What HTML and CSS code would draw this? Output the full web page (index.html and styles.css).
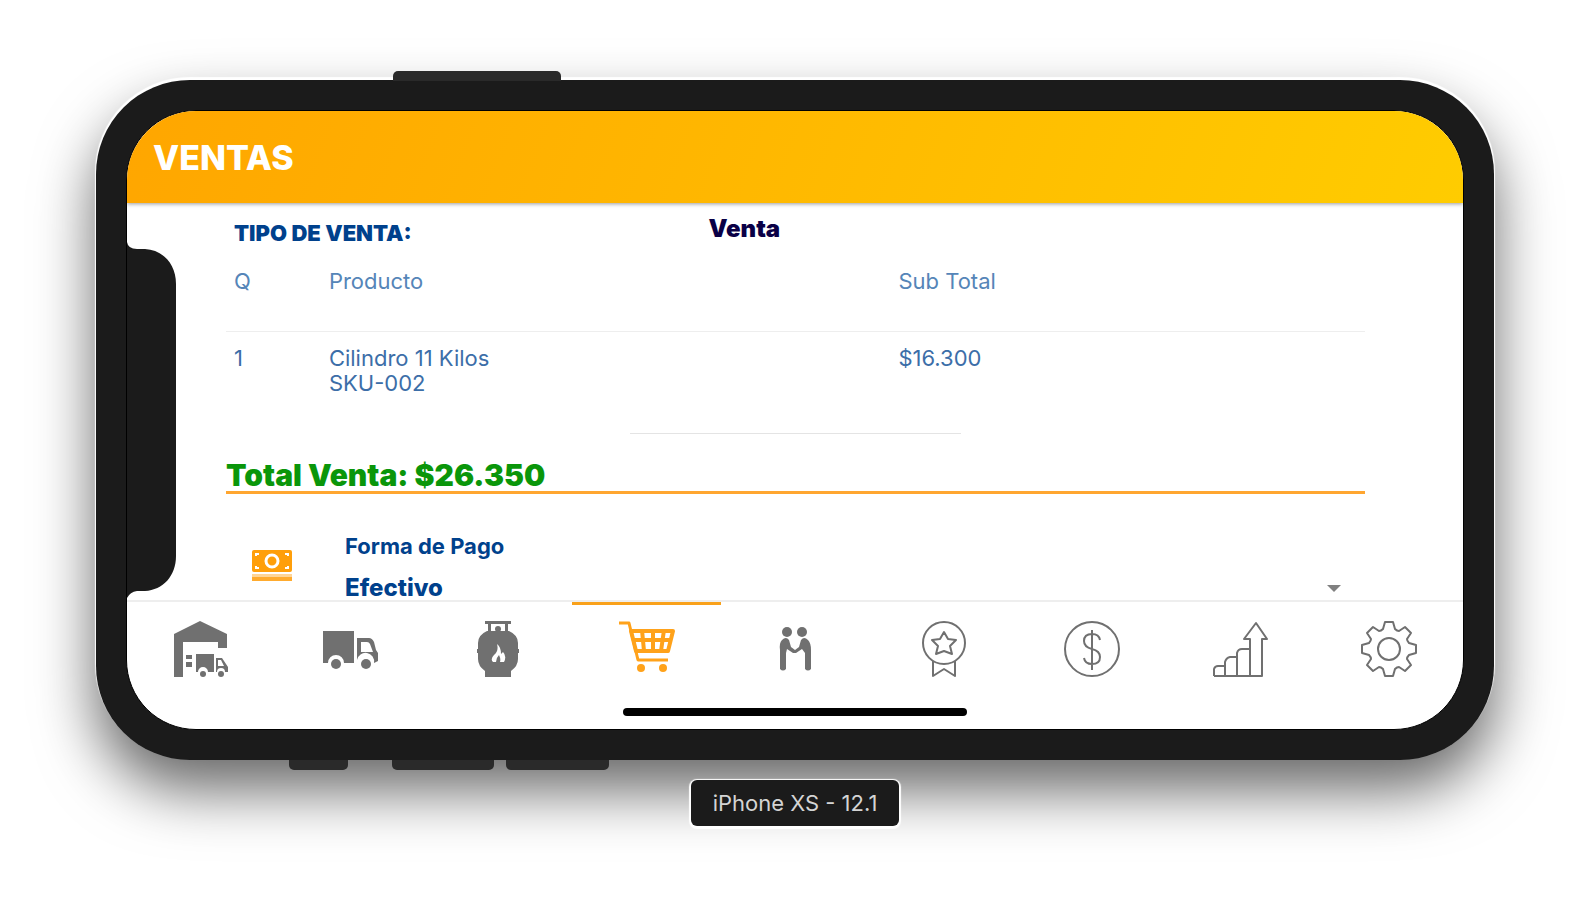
FILE: index.html
```html
<!DOCTYPE html>
<html lang="es">
<head>
    <meta charset="UTF-8">
    <meta name="viewport" content="width=device-width, initial-scale=1.0">
    <title>Ventas</title>
    <link rel="stylesheet" href="styles.css">
</head>
<body>

    <div class="phone">
        <span class="side-button power"></span>
        <span class="side-button mute"></span>
        <span class="side-button volume-up"></span>
        <span class="side-button volume-down"></span>

        <div class="screen">
            <header class="app-header">
                <h1>VENTAS</h1>
            </header>

            <main class="content">
                <div class="sale-type">
                    <span class="sale-label">TIPO DE VENTA:</span>
                    <strong class="sale-value">Venta</strong>
                </div>

                <table class="products">
                    <thead>
                        <tr>
                            <th class="col-q">Q</th>
                            <th class="col-product">Producto</th>
                            <th>Sub Total</th>
                        </tr>
                    </thead>
                    <tbody>
                        <tr>
                            <td>1</td>
                            <td>Cilindro 11 Kilos<br>SKU-002</td>
                            <td>$16.300</td>
                        </tr>
                    </tbody>
                </table>

                <hr class="divider">

                <h2 class="total">Total Venta: $26.350</h2>

                <form class="payment">
                    <svg class="payment-icon" viewBox="0 0 40 32">
                        <rect x="0" y="0" width="40" height="22" rx="2" fill="#ff9f0a"/>
                        <circle cx="20" cy="11" r="6" fill="none" stroke="#fff" stroke-width="3"/>
                        <path d="M4 6V4h3M33 4h3v2M4 16v2h3M33 18h3v-2" fill="none" stroke="#fff" stroke-width="2"/>
                        <path d="M0 24h40v3H0z" fill="#ffd596"/>
                        <path d="M0 27h40v4H0z" fill="#ffab2e"/>
                    </svg>
                    <div class="field">
                        <label for="payment-method">Forma de Pago</label>
                        <div class="select-wrap">
                            <select id="payment-method">
                                <option>Efectivo</option>
                            </select>
                            <svg class="caret" viewBox="0 0 14 7"><path d="M0 0h14L7 7z"/></svg>
                        </div>
                    </div>
                </form>
            </main>

            <nav class="tabs">
                <a href="#" aria-label="Bodega">
                    <svg viewBox="0 0 56 56" fill="currentColor">
                        <path d="M1 13L27 0l27 13v14h-9v-6H10v35H1z"/>
                        <path d="M13 34h6v4h-6zM13 41h6v5h-6z"/>
                        <path d="M23 33h18v18h-6a5 5 0 0 0-10 0h-2z"/>
                        <path fill-rule="evenodd" d="M43 37h6l4 6 2 3v5h-3a4 4 0 0 0-8 0h-1zM45 39v6h6l-3-6z"/>
                        <circle cx="30" cy="53" r="3"/>
                        <circle cx="48" cy="53" r="3"/>
                    </svg>
                </a>
                <a href="#" aria-label="Camión">
                    <svg viewBox="0 0 56 56" fill="currentColor">
                        <path d="M1 10h31v32H22a8 8 0 0 0-16 0H1z"/>
                        <path fill-rule="evenodd" d="M35 17h12q3 0 5 4l2 8 2 3v8l-4 2a8 8 0 0 0-17-3zM39 21v10h12l-3-8q-1-2-3-2z"/>
                        <circle cx="14" cy="43" r="5"/>
                        <circle cx="44" cy="43" r="5"/>
                    </svg>
                </a>
                <a href="#" aria-label="Cilindros">
                    <svg viewBox="0 0 56 56" fill="currentColor">
                        <path d="M15 0h26v3h-3v7h-3V3H21v7h-3V3h-3z"/>
                        <circle cx="28" cy="8" r="3"/>
                        <path fill-rule="evenodd" d="M17 10h22q9 4 9 12v6h1v4h-1v6q0 7-7 12v6H15v-6q-7-5-7-12v-6H7v-4h1v-6q0-8 9-12zM27 23q2 7-3 11-4 4-1 7h3q0-4 3-7 2 4 1 7h4q3-6-1-10l-2 2q0-7-4-10z"/>
                    </svg>
                </a>
                <a href="#" class="active" aria-label="Ventas">
                    <svg viewBox="0 0 56 56" fill="none" stroke="currentColor" stroke-width="3" stroke-linejoin="round">
                        <path d="M0 2h10l9 37h30"/>
                        <path stroke-width="4" d="M12 10h42l-5 20H17zM14 19h38M23 9l2 21M34 9v21M45 9l-3 21"/>
                        <circle cx="22" cy="47" r="4" fill="currentColor" stroke="none"/>
                        <circle cx="44" cy="47" r="4" fill="currentColor" stroke="none"/>
                    </svg>
                </a>
                <a href="#" aria-label="Clientes">
                    <svg viewBox="0 0 56 56" fill="currentColor">
                        <circle cx="20" cy="11" r="5"/>
                        <circle cx="35" cy="11" r="5"/>
                        <path d="M15 19q4-4 7 0l2 7 4 3 4-3 2-7q3-4 7 0 3 3 3 10v19q-3 3-6 0V32l-3-4-6 4h-3l-6-4-1 4v16q-3 3-6 0V29q-1-7 2-10z"/>
                    </svg>
                </a>
                <a href="#" aria-label="Premios">
                    <svg viewBox="0 0 56 56" fill="none" stroke="currentColor" stroke-width="2" stroke-linejoin="round">
                        <circle cx="29" cy="22" r="21"/>
                        <path d="M29 11l4 7 8 1-6 6 2 8-8-3-8 3 2-8-6-6 8-1z"/>
                        <path d="M18 40v15l11-7 11 7V40"/>
                    </svg>
                </a>
                <a href="#" aria-label="Pagos">
                    <svg viewBox="0 0 56 56" fill="none" stroke="currentColor" stroke-width="2">
                        <circle cx="28" cy="28" r="27"/>
                        <path d="M36 19q-1-6-8-6-8 0-8 7 0 6 8 8t8 8q0 7-8 7-7 0-8-6M28 9v40"/>
                    </svg>
                </a>
                <a href="#" aria-label="Reportes">
                    <svg viewBox="0 0 56 56" fill="none" stroke="currentColor" stroke-width="2" stroke-linejoin="round">
                        <path d="M2 55V48q1-3 4-3h7v10M13 55V41q1-4 5-5h7M25 55V32q1-4 5-4h7M38 55V18h-6L44 2l11 16h-5v37zM2 55h36"/>
                    </svg>
                </a>
                <a href="#" aria-label="Ajustes">
                    <svg viewBox="-28 -28 56 56" fill="none" stroke="currentColor" stroke-width="2" stroke-linejoin="round">
                        <path d="M-4-27H4L6-20Q8-18 10-18L16-22 22-16 18-10Q18-8 20-6L27-4V4L20 6Q18 8 18 10L22 16 16 22 10 18Q8 18 6 20L4 27H-4L-6 20Q-8 18-10 18L-16 22-22 16-18 10Q-18 8-20 6L-27 4V-4L-20-6Q-18-8-18-10L-22-16-16-22-10-18Q-8-18-6-20Z"/>
                        <circle r="11"/>
                    </svg>
                </a>
            </nav>

            <div class="home-indicator"></div>

            <svg class="notch" viewBox="0 0 50 356">
                <path d="M0 0Q1 7 10 7H18C36 8 49 22 49 42V314C49 334 36 348 18 349H10Q3 350 0 356Z"/>
            </svg>
        </div>
    </div>

    <p class="device-name">iPhone XS - 12.1</p>

</body>
</html>
```

FILE: styles.css
```css
* {
    box-sizing: border-box;
}

body {
    min-height: 100vh;
    margin: 0;
    padding: 80px 95px 0 96px;
    font-family: 'Inter', sans-serif;
    background-color: #fff;
    color: #00418c;
    font-size: 22px;
    line-height: 28px;
    overflow: hidden;
}

/* device frame */
.phone {
    position: relative;
    padding: 30px;
    border-radius: 94px;
    background-color: #1b1b1b;
    box-shadow: 0 -2px 1px 1px #fff, 0 30px 60px rgba(0, 0, 0, 0.6);
}

.screen {
    position: relative;
    overflow: hidden;
    border: 1px solid #000;
    border-radius: 70px;
    background-color: #fff;
}

.side-button {
    position: absolute;
    height: 10px;
    background-color: #2a2a2a;
}

.power {
    top: -9px;
    left: 297px;
    width: 168px;
    border-radius: 5px 5px 0 0;
}

.mute,
.volume-up,
.volume-down {
    bottom: -10px;
    border-radius: 0 0 5px 5px;
}

.mute {
    left: 193px;
    width: 59px;
}

.volume-up {
    left: 296px;
    width: 102px;
}

.volume-down {
    left: 410px;
    width: 103px;
}

.notch {
    position: absolute;
    top: 50%;
    left: 0;
    width: 50px;
    height: 356px;
    transform: translateY(-50%);
    fill: #1b1b1b;
}

.app-header {
    position: relative;
    padding: 26px 26px 24px;
    background: linear-gradient(110deg, #ffa600, #ffcc00);
    box-shadow: 0 1px 4px rgba(0, 0, 0, 0.4);
}

.app-header h1 {
    margin: 0;
    color: #fff;
    font-size: 34px;
    font-weight: 800;
    line-height: 42px;
}

.content {
    padding: 12px 98px 0 99px;
}

.sale-type {
    display: grid;
    grid-template-columns: 5fr 7fr;
}

.sale-label,
.sale-value {
    padding: 0 8px;
}

.sale-label {
    padding-top: 4px;
    font-weight: 900;
}

.sale-value {
    color: #0a0046;
    font-size: 24px;
    font-weight: 900;
}

.products {
    width: 100%;
    border-collapse: collapse;
    table-layout: fixed;
    text-align: left;
}

.products th {
    padding: 20px 8px 36px;
    border-bottom: 1px solid #eee;
    color: #5585b8;
    font-size: 22px;
    font-weight: 400;
}

.products td {
    padding: 14px 8px 8px;
    color: #3c6ea8;
    font-size: 22px;
    line-height: 25px;
    vertical-align: top;
}

.col-q {
    width: 8.33%;
}

.col-product {
    width: 50%;
}

.divider {
    width: 29%;
    margin: 29px auto 0;
    border: 0;
    border-top: 1px solid #e4e4e4;
}

.total {
    margin: 25px 0 0;
    border-bottom: 3px solid #ffa630;
    color: #0a960a;
    font-size: 30px;
    font-weight: 900;
    line-height: 32px;
}

.payment {
    display: flex;
    align-items: center;
    gap: 53px;
    margin-top: 38px;
    padding: 0 24px 0 26px;
}

.payment-icon {
    width: 40px;
    height: 32px;
}

.field {
    flex: 1;
}

.field label {
    display: block;
    font-size: 22px;
    font-weight: 700;
}

.select-wrap {
    display: flex;
    align-items: center;
    margin-top: 16px;
}

.field select {
    flex: 1;
    height: 24px;
    padding: 0;
    border: 0;
    appearance: none;
    background: none;
    color: #00418c;
    font-family: inherit;
    font-size: 24px;
    font-weight: 800;
    line-height: 24px;
}

.caret {
    width: 14px;
    height: 7px;
    fill: #808080;
}

.tabs {
    display: flex;
    border-top: 2px solid #eee;
}

.tabs a {
    flex: 1;
    display: flex;
    justify-content: center;
    padding-top: 16px;
    border-top: 3px solid transparent;
    color: #707070;
}

.tabs a.active {
    border-top-color: #f9a11b;
    color: #ffa21a;
}

.tabs svg {
    width: 56px;
    height: 56px;
}

.home-indicator {
    width: 344px;
    height: 8px;
    margin: 31px auto 13px;
    border-radius: 4px;
    background-color: #000;
}

.device-name {
    position: relative;
    width: fit-content;
    margin: 20px auto 0;
    padding: 10px 22px;
    border-radius: 6px;
    background-color: #1b1b1b;
    box-shadow: 0 1px 1px 2px #fff;
    color: #d4d4d4;
    font-size: 22px;
    line-height: 26px;
}
```
